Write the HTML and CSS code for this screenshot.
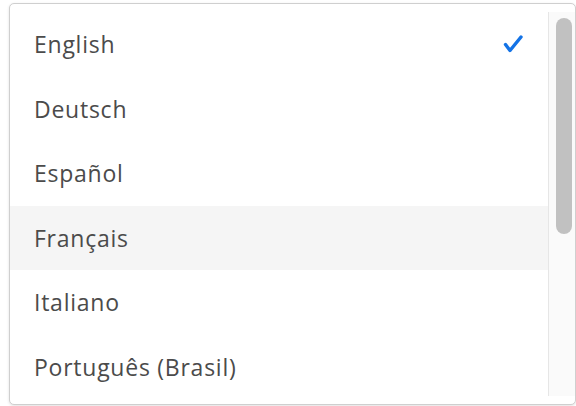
FILE: index.html
```html
<!DOCTYPE html>
<html>
<head>
<meta charset="utf-8">
<link rel="stylesheet" href="styles.css">
</head>
<body>
<div class="menu">
  <ul class="list">
    <li class="item selected"><span class="label">English</span>
      <svg class="check" width="24" height="24" viewBox="0 0 24 24"><path d="M3.5 10.5 L8 16.5 L19 3" fill="none" stroke="#1473e6" stroke-width="3.4" stroke-linecap="round" stroke-linejoin="round"/></svg>
    </li>
    <li class="item"><span class="label">Deutsch</span></li>
    <li class="item"><span class="label">Español</span></li>
    <li class="item hover"><span class="label">Français</span></li>
    <li class="item"><span class="label">Italiano</span></li>
    <li class="item"><span class="label">Português (Brasil)</span></li>
  </ul>
  <div class="scrollbar"><div class="thumb"></div></div>
</div>
</body>
</html>
```
FILE: styles.css
```css
html, body {
  margin: 0;
  padding: 0;
  background: #ffffff;
}
body {
  width: 576px;
  height: 406px;
  overflow: hidden;
  font-family: "Open Sans", "Liberation Sans", sans-serif;
}
.menu {
  box-sizing: border-box;
  margin: 3px 0 0 9px;
  width: 567px;
  height: 402px;
  border: 1px solid #cfcfcf;
  border-radius: 5px;
  background: #fff;
  box-shadow: 0 1px 3px rgba(0,0,0,0.12);
  display: flex;
}
.list {
  flex: 1;
  list-style: none;
  margin: 0;
  padding: 8px 0 0 0;
  overflow: hidden;
}
.item {
  height: 64.5px;
  display: flex;
  align-items: center;
  padding: 0 0 0 24px;
  font-size: 23px;
  letter-spacing: 0.75px;
  color: #4b4b4b;
}
.item.hover {
  background: #f5f5f5;
}
.label {
  flex: 1;
}
.check {
  margin-right: 22px;
  margin-top: 3px;
}
.scrollbar {
  box-sizing: border-box;
  width: 27px;
  margin: 8px 0;
  border-left: 1px solid #e6e6e6;
  background: #fafafa;
  padding: 6px 0 0 7px;
}
.thumb {
  width: 16px;
  height: 216px;
  border-radius: 8px;
  background: #c1c1c1;
}
```
